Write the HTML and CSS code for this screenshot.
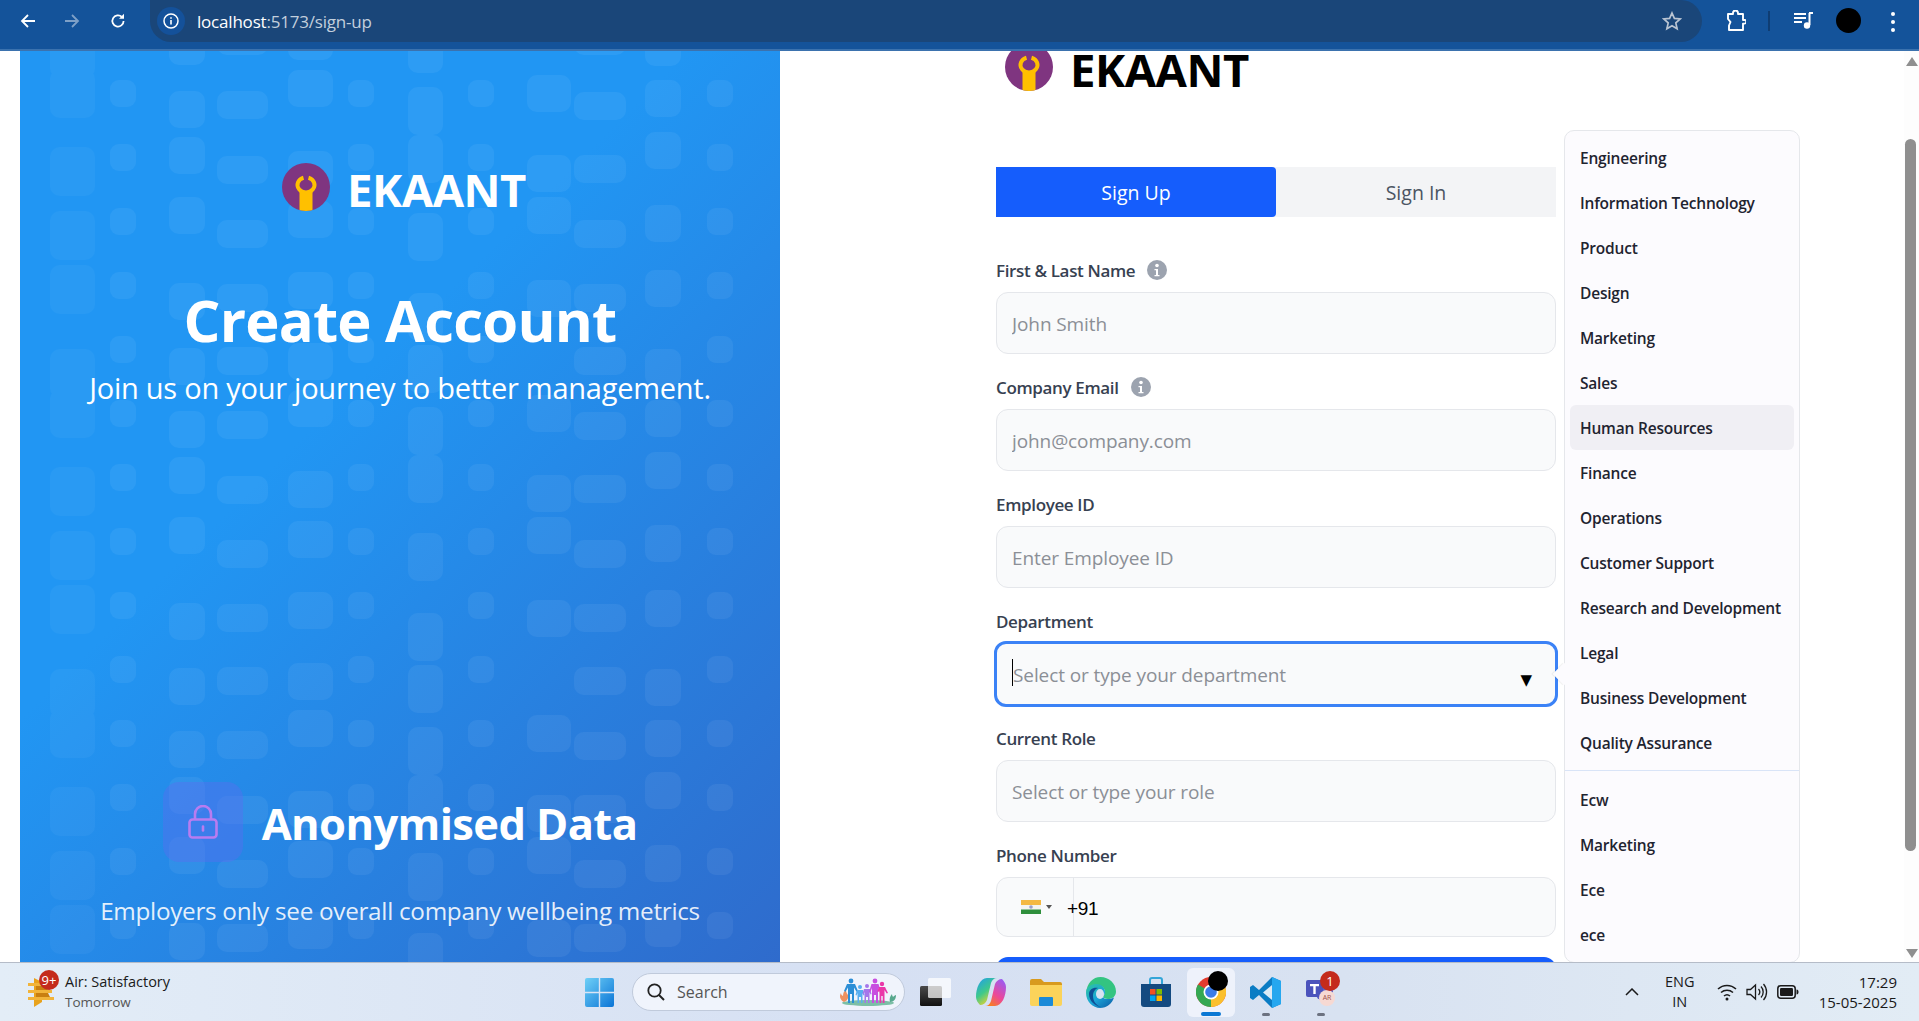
FILE: index.html
```html
<!DOCTYPE html>
<html>
<head>
<meta charset="utf-8">
<title>Sign up</title>
<link rel="stylesheet" href="styles.css">
</head>
<body>

<header class="chrome">
 <svg class="nav-icon" viewBox="0 0 16 16"><path d="M15 8H2M8 2 2 8l6 6" fill="none" stroke="#fff" stroke-width="1.8"/></svg>
 <svg class="nav-icon dim" viewBox="0 0 16 16"><path d="M1 8h13M8 2l6 6-6 6" fill="none" stroke="#fff" stroke-width="1.8"/></svg>
 <svg class="nav-icon" viewBox="0 0 16 16"><path d="M13.6 8a5.6 5.6 0 1 1-1.7-4.1" fill="none" stroke="#fff" stroke-width="1.8"/><path d="M14 0.8v5h-5z" fill="#fff"/></svg>
 <div class="omnibox">
  <span class="site-info"><svg viewBox="0 0 16 16" width="16" height="16"><circle cx="8" cy="8" r="7" fill="none" stroke="#fff" stroke-width="1.5"/><path d="M8 7v4.6M8 4.2v1.6" stroke="#fff" stroke-width="1.6"/></svg></span>
  <span class="url">localhost<span class="url-rest">:5173/sign-up</span></span>
  <svg class="star" viewBox="0 0 20 20"><path d="M10 2l2.4 5.4 5.8.6-4.4 3.9 1.3 5.8L10 14.7l-5.1 3 1.3-5.8L1.800 8l5.800-.6z" fill="none" stroke="#b9c4d2" stroke-width="1.7"/></svg>
 </div>
 <svg class="ext" viewBox="0 0 20 22"><path d="M2 4h5V3a2.500 2.500 0 0 1 5 0v1h5v6h1.500a1.800 1.800 0 0 1 0 3.600H17V20H3v-4.500L4.500 12 2 9z" fill="none" stroke="#fff" stroke-width="1.900" stroke-linejoin="round"/></svg>
 <span class="bar-sep"></span>
 <svg class="media" viewBox="0 0 20 18"><path d="M0 2h12M0 6h12M0 10h8" stroke="#fff" stroke-width="1.800"/><path d="M15 1h4M15.500 1v12" stroke="#fff" stroke-width="2" fill="none"/><circle cx="13" cy="13.500" r="3.200" fill="#fff"/></svg>
 <span class="avatar"></span>
 <span class="dots"><i></i><i></i><i></i></span>
</header>

<main class="page">
 <section class="hero">
  <svg class="pattern" width="760" height="911">
   <defs>
    <pattern id="blocks" width="760" height="320" patternUnits="userSpaceOnUse" patternTransform="translate(-20 -51)">
     <g fill="#fff" opacity=".035">
      <rect x="50" y="29" width="45" height="49" rx="10"/><rect x="50" y="69" width="45" height="49" rx="10"/><rect x="50" y="147" width="45" height="49" rx="10"/><rect x="50" y="211" width="45" height="49" rx="10"/><rect x="50" y="265" width="45" height="49" rx="10"/>
     </g>
     <g fill="#fff" opacity=".055">
      <rect x="110" y="16" width="26" height="27" rx="9"/><rect x="110" y="80" width="26" height="27" rx="9"/><rect x="110" y="144" width="26" height="27" rx="9"/><rect x="110" y="208" width="26" height="27" rx="9"/><rect x="110" y="272" width="26" height="27" rx="9"/>
      <rect x="169" y="28" width="36" height="37" rx="10"/><rect x="169" y="91" width="36" height="37" rx="10"/><rect x="169" y="137" width="36" height="37" rx="10"/><rect x="169" y="197" width="36" height="37" rx="10"/><rect x="169" y="283" width="36" height="37" rx="10"/>
      <rect x="217" y="27" width="51" height="28" rx="10"/><rect x="217" y="91" width="51" height="28" rx="10"/><rect x="217" y="156" width="51" height="28" rx="10"/><rect x="217" y="220" width="51" height="28" rx="10"/><rect x="217" y="284" width="51" height="28" rx="10"/>
      <rect x="288" y="23" width="45" height="37" rx="10"/><rect x="288" y="70" width="45" height="37" rx="10"/><rect x="288" y="151" width="45" height="37" rx="10"/><rect x="288" y="201" width="45" height="37" rx="10"/><rect x="288" y="272" width="45" height="37" rx="10"/>
      <rect x="348" y="16" width="26" height="27" rx="9"/><rect x="348" y="80" width="26" height="27" rx="9"/><rect x="348" y="144" width="26" height="27" rx="9"/><rect x="348" y="208" width="26" height="27" rx="9"/><rect x="348" y="272" width="26" height="27" rx="9"/>
      <rect x="408" y="-27" width="35" height="48" rx="10"/><rect x="408" y="25" width="35" height="48" rx="10"/><rect x="408" y="87" width="35" height="48" rx="10"/><rect x="408" y="135" width="35" height="48" rx="10"/><rect x="408" y="213" width="35" height="48" rx="10"/><rect x="408" y="293" width="35" height="48" rx="10"/>
      <rect x="468" y="16" width="26" height="27" rx="9"/><rect x="468" y="80" width="26" height="27" rx="9"/><rect x="468" y="144" width="26" height="27" rx="9"/><rect x="468" y="208" width="26" height="27" rx="9"/><rect x="468" y="272" width="26" height="27" rx="9"/>
      <rect x="527" y="75" width="44" height="37" rx="10"/><rect x="527" y="155" width="44" height="37" rx="10"/><rect x="527" y="197" width="44" height="37" rx="10"/><rect x="527" y="280" width="44" height="37" rx="10"/>
      <rect x="574" y="27" width="52" height="28" rx="10"/><rect x="574" y="92" width="52" height="28" rx="10"/><rect x="574" y="155" width="52" height="28" rx="10"/><rect x="574" y="220" width="52" height="28" rx="10"/><rect x="574" y="284" width="52" height="28" rx="10"/>
      <rect x="645" y="29" width="36" height="37" rx="10"/><rect x="645" y="80" width="36" height="37" rx="10"/><rect x="645" y="132" width="36" height="37" rx="10"/><rect x="645" y="205" width="36" height="37" rx="10"/><rect x="645" y="270" width="36" height="37" rx="10"/>
      <rect x="707" y="16" width="26" height="27" rx="9"/><rect x="707" y="80" width="26" height="27" rx="9"/><rect x="707" y="144" width="26" height="27" rx="9"/><rect x="707" y="208" width="26" height="27" rx="9"/><rect x="707" y="272" width="26" height="27" rx="9"/>
     </g>
    </pattern>
   </defs>
   <rect width="760" height="911" fill="url(#blocks)"/>
  </svg>

  <div class="brand brand-light">
   <svg class="brand-mark" viewBox="0 0 48 48"><defs><clipPath id="disc1"><circle cx="24" cy="24" r="24"/></clipPath></defs><circle cx="24" cy="24" r="24" fill="#7f3580"/><g clip-path="url(#disc1)" fill="none"><path d="M21.500 14.800A8.500 7.500 0 1 0 26.500 14.800" stroke="#ffc000" stroke-width="4"/><rect x="17.500" y="28" width="13" height="21" fill="#ffc000"/></g></svg>
   <span class="brand-name">EKAANT</span>
  </div>
  <h1 class="hero-title">Create Account</h1>
  <p class="hero-sub">Join us on your journey to better management.</p>

  <div class="feature">
   <span class="feature-icon"><svg viewBox="0 0 30 34" width="30" height="34"><path d="M7 15V9a8 8 0 0 1 16 0v6" fill="none" stroke="#b87cf0" stroke-width="2.600"/><rect x="1.500" y="14.500" width="27" height="18" rx="3" fill="none" stroke="#b87cf0" stroke-width="2.600"/><path d="M15 21.500v4" stroke="#b87cf0" stroke-width="2.600" stroke-linecap="round"/></svg></span>
   <h2 class="feature-title">Anonymised Data</h2>
  </div>
  <p class="feature-text">Employers only see overall company wellbeing metrics</p>
 </section>

 <section class="panel">
  <div class="brand brand-dark">
   <svg class="brand-mark" viewBox="0 0 48 48"><defs><clipPath id="disc2"><circle cx="24" cy="24" r="24"/></clipPath></defs><circle cx="24" cy="24" r="24" fill="#7f3580"/><g clip-path="url(#disc2)" fill="none"><path d="M21.500 14.800A8.500 7.500 0 1 0 26.500 14.800" stroke="#ffc000" stroke-width="4"/><rect x="17.500" y="28" width="13" height="21" fill="#ffc000"/></g></svg>
   <span class="brand-name">EKAANT</span>
  </div>

  <div class="tabs">
   <span class="tab tab-on">Sign Up</span>
   <span class="tab">Sign In</span>
  </div>

  <form class="form">
   <div class="field">
    <label class="field-label">First &amp; Last Name <svg class="info" viewBox="0 0 20 20"><circle cx="10" cy="10" r="10" fill="#9ca3af"/><circle cx="10" cy="5.500" r="1.800" fill="#fff"/><path d="M7.500 9h3.500v6h1.500v1.200h-5V15H9v-4.800H7.500z" fill="#fff"/></svg></label>
    <input class="input" type="text" placeholder="John Smith">
   </div>
   <div class="field">
    <label class="field-label">Company Email <svg class="info" viewBox="0 0 20 20"><circle cx="10" cy="10" r="10" fill="#9ca3af"/><circle cx="10" cy="5.500" r="1.800" fill="#fff"/><path d="M7.500 9h3.500v6h1.500v1.200h-5V15H9v-4.800H7.500z" fill="#fff"/></svg></label>
    <input class="input" type="text" placeholder="john@company.com">
   </div>
   <div class="field">
    <label class="field-label">Employee ID</label>
    <input class="input" type="text" placeholder="Enter Employee ID">
   </div>
   <div class="field">
    <label class="field-label">Department</label>
    <div class="select-wrap">
     <input class="input input-focus" type="text" placeholder="Select or type your department">
     <span class="text-caret"></span>
     <span class="select-arrow">&#9660;</span>
    </div>
   </div>
   <div class="field">
    <label class="field-label">Current Role</label>
    <input class="input" type="text" placeholder="Select or type your role">
   </div>
   <div class="field">
    <label class="field-label">Phone Number</label>
    <div class="phone">
     <span class="flag-box">
      <svg class="flag" viewBox="0 0 20 14"><rect width="20" height="5" fill="#f4b942"/><rect y="5" width="20" height="4.500" fill="#f4f4f0"/><rect y="9.500" width="20" height="4.500" fill="#2f8f3c"/><circle cx="10" cy="7" r="1.800" fill="#9aa0c8"/></svg>
      <span class="flag-arrow"></span>
     </span>
     <span class="phone-code">+91</span>
    </div>
   </div>
   <button class="submit" type="button"></button>
  </form>

  <div class="dropdown">
   <span class="dropdown-tip"></span>
   <ul class="dropdown-list">
    <li>Engineering</li>
    <li>Information Technology</li>
    <li>Product</li>
    <li>Design</li>
    <li>Marketing</li>
    <li>Sales</li>
    <li class="hover">Human Resources</li>
    <li>Finance</li>
    <li>Operations</li>
    <li>Customer Support</li>
    <li>Research and Development</li>
    <li>Legal</li>
    <li>Business Development</li>
    <li>Quality Assurance</li>
   </ul>
   <ul class="dropdown-list dropdown-extra">
    <li>Ecw</li>
    <li>Marketing</li>
    <li>Ece</li>
    <li>ece</li>
   </ul>
  </div>

  <div class="scrollbar">
   <span class="scroll-up"></span>
   <span class="scroll-thumb"></span>
   <span class="scroll-down"></span>
  </div>
 </section>
</main>

<footer class="taskbar">
 <div class="weather">
  <span class="weather-icon">
   <svg viewBox="0 0 26 32" width="26" height="32"><path d="M6 2l8 4v20l-8 5z" fill="#e8a21c"/><path d="M0 7h20v3H0zM0 14h24v3H0zM0 21h26v3H0z" fill="#f2b43a"/><path d="M8 10h10l2 4H8zM8 17h12l2 4H8z" fill="#c97f10"/></svg>
   <span class="weather-badge">9+</span>
  </span>
  <span class="weather-text"><span>Air: Satisfactory</span><span class="weather-sub">Tomorrow</span></span>
 </div>

 <svg class="win" viewBox="0 0 29 29"><defs><linearGradient id="wing" x1="0" y1="0" x2="1" y2="1"><stop offset="0" stop-color="#6fd0f7"/><stop offset="1" stop-color="#0a74d6"/></linearGradient></defs><path d="M0 2a2 2 0 0 1 2-2h11.800v13.800H0zM15.200 0H27a2 2 0 0 1 2 2v11.800H15.200zM0 15.200h13.800V29H2a2 2 0 0 1-2-2zM15.200 15.200H29V27a2 2 0 0 1-2 2H15.200z" fill="url(#wing)"/></svg>

 <div class="search">
  <svg class="search-icon" viewBox="0 0 18 18"><circle cx="7.500" cy="7.500" r="6.200" fill="none" stroke="#222" stroke-width="1.800"/><path d="M12 12l5 5" stroke="#222" stroke-width="2"/></svg>
  <span class="search-label">Search</span>
  <svg class="search-art" viewBox="0 0 60 28">
   <ellipse cx="30" cy="25" rx="26" ry="3" fill="#7cbfa6"/>
   <path d="M6 24c-4-2-5-6-3-9 0 2 1 2 2 3 0-3 1-5 3-6 0 2 1 4 2 5 1 3-1 6-4 7z" fill="#ee9160"/>
   <path d="M52 24c-1-3 0-6 2-8 0 2 1 2 1 3 1-1 2-2 3-2 0 4-2 7-6 7z" fill="#58a88e"/>
   <g fill="#2c8ed6"><circle cx="13" cy="3" r="2.400"/><path d="M9 6h8l3 7-1.500.7L16 9.500V25h-2v-9h-2v9h-2V9.500l-2.500 4.200L6 13z"/></g>
   <g fill="#58aef0"><circle cx="22" cy="9" r="2"/><path d="M19 12h6l1.500 5-1 .4L24.500 15v10h-1.500v-6h-2v6h-1.500V15l-1 2.400-1-.4z"/></g>
   <g fill="#a576ea"><circle cx="29" cy="8" r="2"/><path d="M26 11h6l1.500 5-1 .4L31.500 14v11h-1.500v-6h-2v6h-1.500V14l-1 2.400-1-.4z"/></g>
   <g fill="#c74fe0"><circle cx="37" cy="3" r="2.400"/><path d="M33.500 6h7l2.500 8-1.300.5L40 10v15h-2v-8h-2v8h-2V10l-1.700 4.500L31 14z"/></g>
   <g fill="#ea37a8"><circle cx="44" cy="6" r="2.200"/><path d="M41 9h6l3 6-1.300.6L46.500 12v13h-1.800v-7h-1.400v7h-1.800V12l-1 2-1.200-.6z"/></g>
  </svg>
 </div>

 <div class="apps">
  <span class="app">
   <svg viewBox="0 0 31 28" width="31" height="28"><defs><linearGradient id="taskv" x1="0" y1="0" x2="0" y2="1"><stop offset="0" stop-color="#4a4a4a"/><stop offset="1" stop-color="#111"/></linearGradient></defs><rect y="8" width="22" height="20" rx="1.500" fill="url(#taskv)"/><rect x="8" width="23" height="20" rx="1.500" fill="#fff" fill-opacity=".72"/></svg>
  </span>
  <span class="app">
   <svg viewBox="0 0 30 28" width="30" height="28"><defs><linearGradient id="cop1" x1="0" y1="0" x2=".6" y2="1"><stop offset="0" stop-color="#1f9cf0"/><stop offset=".55" stop-color="#3fc98a"/><stop offset="1" stop-color="#f5d327"/></linearGradient><linearGradient id="cop2" x1=".8" y1="0" x2=".2" y2="1"><stop offset="0" stop-color="#9a5cf2"/><stop offset=".55" stop-color="#ec4899"/><stop offset="1" stop-color="#f98316"/></linearGradient></defs><path d="M11 0h10c-3 0-5 2-6 5l-4 17c-1 3-4 5-7 5-2-2-4-5-4-8C0 10 4 0 11 0z" fill="url(#cop1)"/><path d="M19 28H9c3 0 5-2 6-5l4-17c1-3 4-5 7-5 2 2 4 5 4 8 0 9-4 19-11 19z" fill="url(#cop2)"/></svg>
  </span>
  <span class="app">
   <svg viewBox="0 0 32 28" width="32" height="28"><path d="M0 3a2 2 0 0 1 2-2h9l3 3h16a2 2 0 0 1 2 2v3H0z" fill="#d89a1e"/><path d="M0 7h32v19a2 2 0 0 1-2 2H2a2 2 0 0 1-2-2z" fill="#fbd35a"/><rect x="9" y="19" width="14" height="9" rx="1" fill="#1a8ad8"/></svg>
  </span>
  <span class="app">
   <svg viewBox="0 0 31 31" width="31" height="31"><defs><linearGradient id="edg" x1="0" y1="0" x2="1" y2="1"><stop offset="0" stop-color="#2ec4a0"/><stop offset=".5" stop-color="#1aa5d8"/><stop offset="1" stop-color="#0c59a4"/></linearGradient></defs><path d="M15.500 0C24 0 31 6.500 31 14.500c0 5-4 7.500-8 7.500-3 0-5-1-5-2.500 0-1 2-1.500 2-4.500 0-4-3.500-7-8-7-5 0-9 3.500-11 8C2 6 8 0 15.500 0z" fill="#33c481"/><path d="M1 16c0-5 4-9 10-9 5 0 9 3 9 8 0 3-2 3.500-2 4.500 0 3 6 3.500 11 1-2 6-7 10.500-14 10.500C8 31 1 24.500 1 16z" fill="url(#edg)"/><path d="M13 11c-3 1-5 4-5 8 0 5 3 9 8 11-6-1-12-6-12-13 0-4 4-7 9-6z" fill="#0f4f95"/><ellipse cx="15" cy="17" rx="4" ry="5" fill="#d8e2f1"/></svg>
  </span>
  <span class="app">
   <svg viewBox="0 0 30 30" width="30" height="30"><path d="M9 8V3a2 2 0 0 1 2-2h8a2 2 0 0 1 2 2v5" fill="none" stroke="#33a5d8" stroke-width="2"/><path d="M0 7h30v20a3 3 0 0 1-3 3H3a3 3 0 0 1-3-3z" fill="#144a80"/><rect x="9" y="12" width="5.500" height="5.500" fill="#f25022"/><rect x="15.500" y="12" width="5.500" height="5.500" fill="#7fba00"/><rect x="9" y="18.500" width="5.500" height="5.500" fill="#00a4ef"/><rect x="15.500" y="18.500" width="5.500" height="5.500" fill="#ffb900"/></svg>
  </span>
  <span class="app app-active">
   <svg viewBox="0 0 30 30" width="30" height="30"><circle cx="15" cy="15" r="15" fill="#e33b2e"/><path d="M15 15 28 7.500A15 15 0 0 1 15 30z" fill="#fbc02d"/><path d="M15 15 15 30A15 15 0 0 1 2 7.500z" fill="#34a853"/><circle cx="15" cy="15" r="7.500" fill="#fff"/><circle cx="15" cy="15" r="5.800" fill="#3b7be8"/></svg>
   <span class="app-avatar"></span>
   <span class="app-line"></span>
  </span>
  <span class="app app-open">
   <svg viewBox="0 0 31 31" width="31" height="31"><path d="M22 0l9 4v23l-9 4L9 18l-6 5-3-2v-11l3-2 6 5z" fill="#0a7cc4"/><path d="M22 0l9 4v23l-9 4z" fill="#25a7ef"/><path d="M22 8v15l-9-7.500z" fill="#f2f6fc" fill-opacity=".9"/></svg>
  </span>
  <span class="app app-open">
   <svg class="teams" viewBox="0 0 30 30" width="30" height="30"><circle cx="20" cy="10" r="7" fill="#7b83eb"/><circle cx="18" cy="18" r="9" fill="#5b5fc7"/><rect y="6" width="17" height="17" rx="2" fill="#4b53bc"/><path d="M4 10h9v2.200h-3.300V20H7.300v-7.800H4z" fill="#fff"/></svg>
   <span class="teams-initials">AR</span>
   <span class="teams-badge">1</span>
  </span>
 </div>

 <div class="tray">
  <svg class="tray-up" viewBox="0 0 14 8"><path d="M1 7l6-6 6 6" fill="none" stroke="#1a1a1a" stroke-width="1.500"/></svg>
  <span class="lang">ENG<br>IN</span>
  <svg class="tray-icon" viewBox="0 0 20 18" width="20" height="18"><g fill="none" stroke="#1a1a1a" stroke-width="1.500"><path d="M1 6a13 13 0 0 1 18 0M4 9.500a9 9 0 0 1 12 0M7 13a4.500 4.500 0 0 1 6 0"/></g><circle cx="10" cy="16" r="1.500" fill="#1a1a1a"/></svg>
  <svg class="tray-icon" viewBox="0 0 22 18" width="22" height="18"><g fill="none" stroke="#1a1a1a" stroke-width="1.300"><path d="M1 6.500h3.500L9.500 2v14l-5-4.500H1z"/><path d="M12.500 6a4.500 4.500 0 0 1 0 6M15 3.500a8 8 0 0 1 0 11M17.500 1a12 12 0 0 1 0 16"/></g></svg>
  <svg class="tray-icon" viewBox="0 0 22 14" width="22" height="14"><rect x=".8" y=".8" width="17.400" height="12.400" rx="3" fill="none" stroke="#1a1a1a" stroke-width="1.500"/><rect x="3" y="3" width="13" height="8" rx="1.200" fill="#1a1a1a"/><path d="M19.500 4.500c1.500 0 2 1 2 2.500s-.5 2.500-2 2.500z" fill="#1a1a1a"/></svg>
  <span class="clock">17:29<br>15-05-2025</span>
 </div>
</footer>

</body>
</html>
```
FILE: styles.css
```css
* {
 box-sizing: border-box;
}
html, body {
 margin: 0;
 height: 100%;
 overflow: hidden;
}
body {
 width: 1919px;
 height: 1021px;
 display: flex;
 flex-direction: column;
 background: #fff;
 font-family: "Open Sans", "Noto Sans", sans-serif;
}

/* browser bar */
.chrome {
 height: 51px;
 flex: none;
 display: flex;
 align-items: flex-start;
 background: #14539a;
 border-bottom: 2px solid #3b72ae;
}
.nav-icon {
 width: 16px;
 height: 16px;
 margin: 13px 0 0 20px;
 flex: none;
}
.nav-icon + .nav-icon {
 margin-left: 28px;
}
.nav-icon + .nav-icon + .nav-icon {
 margin-left: 30px;
}
.dim {
 opacity: .45;
}
.omnibox {
 width: 1552px;
 height: 42px;
 margin-left: 24px;
 display: flex;
 align-items: center;
 padding-left: 7px;
 background: #1a4679;
 border-radius: 0 21px 21px 21px;
}
.site-info {
 width: 28px;
 height: 28px;
 border-radius: 50%;
 background: #14519a;
 display: flex;
 align-items: center;
 justify-content: center;
}
.url {
 margin-left: 12px;
 font-size: 17px;
 letter-spacing: -.2px;
 color: #fff;
}
.url-rest {
 color: #c2cfdd;
}
.star {
 width: 20px;
 height: 20px;
 margin-left: auto;
 margin-right: 20px;
}
.ext {
 width: 20px;
 height: 22px;
 margin: 10px 0 0 24px;
}
.bar-sep {
 width: 2px;
 height: 20px;
 margin: 11px 0 0 22px;
 background: #0f3d73;
}
.media {
 width: 20px;
 height: 18px;
 margin: 12px 0 0 24px;
}
.avatar {
 width: 25px;
 height: 25px;
 margin: 8px 0 0 22px;
 border-radius: 50%;
 background: #000;
}
.dots {
 display: flex;
 flex-direction: column;
 gap: 4px;
 margin: 12px 0 0 30px;
}
.dots i {
 width: 4px;
 height: 4px;
 border-radius: 50%;
 background: #fff;
}

/* page */
.page {
 flex: 1;
 min-height: 0;
 display: flex;
 position: relative;
 overflow: hidden;
 padding-left: 20px;
}
.hero {
 width: 760px;
 flex: none;
 position: relative;
 display: flex;
 flex-direction: column;
 align-items: center;
 padding-top: 112px;
 color: #fff;
 background: linear-gradient(135deg, #2196f3 40%, #2f6bcc);
}
.hero > * {
 position: relative;
}
.hero .pattern {
 position: absolute;
 left: 0;
 top: 0;
}
.brand {
 height: 48px;
 display: flex;
 align-items: flex-start;
 gap: 17px;
}
.brand-light {
 margin-left: 8px;
}
.brand-mark {
 width: 48px;
 height: 48px;
}
.brand-name {
 height: 48px;
 padding-top: 8px;
 font-size: 45.500px;
 font-weight: 700;
 line-height: 37px;
 letter-spacing: -.5px;
}
.hero-title {
 margin: 75px 0 0;
 font-size: 58px;
 line-height: 68px;
 font-weight: 700;
 letter-spacing: -.8px;
}
.hero-sub {
 margin: 16px 0 0;
 font-size: 29px;
 line-height: 36px;
 letter-spacing: -.25px;
}
.feature {
 margin-top: 376px;
 display: flex;
 align-items: center;
 gap: 19px;
}
.feature-icon {
 width: 80px;
 height: 80px;
 border-radius: 16px;
 background: rgba(99, 102, 241, .35);
 display: flex;
 align-items: center;
 justify-content: center;
}
.feature-title {
 margin: 0;
 padding-top: 2px;
 font-size: 43.500px;
 font-weight: 700;
 letter-spacing: -.6px;
}
.feature-text {
 margin: 32px 0 0;
 font-size: 24.300px;
 line-height: 34px;
 letter-spacing: -.3px;
 color: rgba(255, 255, 255, .88);
}

/* form side */
.panel {
 flex: 1;
 padding-left: 216px;
}
.brand-dark {
 margin: -8px 0 0 9px;
 color: #000;
}
.tabs {
 width: 560px;
 height: 50px;
 margin-top: 76px;
 display: flex;
 background: #f3f4f6;
}
.tab {
 width: 280px;
 display: flex;
 align-items: center;
 justify-content: center;
 font-size: 19.500px;
 color: #4b5563;
}
.tab-on {
 background: #155dfc;
 color: #fff;
 border-radius: 0 4px 4px 0;
}
.form {
 width: 560px;
 margin-top: 41px;
}
.field {
 margin-bottom: 21px;
}
.field-label {
 height: 24px;
 margin-bottom: 10px;
 display: flex;
 align-items: center;
 gap: 12px;
 font-size: 17px;
 font-weight: 600;
 letter-spacing: -.35px;
 color: #374151;
}
.info {
 width: 20px;
 height: 20px;
}
.input {
 display: block;
 width: 100%;
 height: 62px;
 padding: 1px 15px 0;
 border: 1px solid #e5e7eb;
 border-radius: 12px;
 background: #f9fafb;
 font-family: inherit;
 font-size: 19px;
 letter-spacing: -.1px;
 outline: none;
}
.input::placeholder {
 color: #8b8f96;
 opacity: 1;
}
.select-wrap {
 position: relative;
}
.input-focus {
 width: 564px;
 height: 66px;
 margin: -2px 0 -2px -2px;
 padding-left: 16px;
 border: 3px solid #3b82f6;
}
.text-caret {
 position: absolute;
 left: 16px;
 top: 18px;
 width: 1px;
 height: 27px;
 background: #000;
}
.select-arrow {
 position: absolute;
 right: 24px;
 top: 29px;
 font-family: "DejaVu Sans", sans-serif;
 font-size: 15px;
 line-height: 20px;
 color: #000;
}
.phone {
 height: 60px;
 display: flex;
 align-items: center;
 border: 1px solid #e5e7eb;
 border-radius: 12px;
 background: #f9fafb;
}
.flag-box {
 width: 77px;
 height: 100%;
 display: flex;
 align-items: center;
 padding-left: 24px;
 gap: 5px;
 border-right: 1px solid #e5e7eb;
}
.flag {
 width: 20px;
 height: 14px;
}
.flag-arrow {
 border-left: 3px solid transparent;
 border-right: 3px solid transparent;
 border-top: 4px solid #555;
}
.phone-code {
 margin-left: -7px;
 padding-top: 3px;
 font-family: "Liberation Sans", sans-serif;
 font-size: 19px;
 letter-spacing: -.3px;
 color: #000;
}
.submit {
 display: block;
 width: 100%;
 height: 50px;
 margin-top: -1px;
 border: none;
 border-radius: 12px;
 background: #155dfc;
}

/* department menu, over the form */
.dropdown {
 position: absolute;
 left: 1564px;
 top: 79px;
 width: 236px;
 height: 833px;
 padding: 4px 5px;
 background: #fcfbfe;
 border: 1px solid #e5e7eb;
 border-radius: 10px;
 font-size: 15.500px;
 font-weight: 600;
 color: #1f2430;
}
.dropdown-tip {
 position: absolute;
 left: -9px;
 top: 535px;
 width: 16px;
 height: 16px;
 background: #fcfbfe;
 box-shadow: -1px 1px 1px rgba(0, 0, 0, .06);
 transform: rotate(45deg);
}
.dropdown-list {
 position: relative;
 margin: 0;
 padding: 0;
 list-style: none;
}
.dropdown-list li {
 height: 45px;
 display: flex;
 align-items: center;
 padding-left: 10px;
 border-radius: 6px;
 letter-spacing: -.2px;
 white-space: nowrap;
}
.dropdown-list .hover {
 background: #f0eff4;
}
.dropdown-extra {
 margin: 5px -5px 0;
 padding: 6px 5px 0;
 border-top: 1px solid #d9e4f7;
}
.scrollbar {
 position: absolute;
 right: 0;
 top: 0;
 width: 15px;
 height: 100%;
 background: #fdfdfd;
}
.scroll-up, .scroll-down {
 position: absolute;
 left: 2px;
 border-left: 6px solid transparent;
 border-right: 6px solid transparent;
}
.scroll-up {
 top: 6px;
 border-bottom: 9px solid #8f8f8f;
}
.scroll-down {
 bottom: 4px;
 border-top: 9px solid #8f8f8f;
}
.scroll-thumb {
 position: absolute;
 left: 1px;
 top: 88px;
 width: 11px;
 height: 712px;
 border-radius: 6px;
 background: #8f8f8f;
}

/* windows taskbar */
.taskbar {
 height: 59px;
 flex: none;
 display: flex;
 align-items: center;
 border-top: 1px solid #b5bcc8;
 background: linear-gradient(90deg, #e3edf7, #d6e0f3 45%, #d8e2f1 70%, #e2ecf5);
 font-size: 14px;
 color: #1a1a1a;
}
.weather {
 width: 585px;
 flex: none;
 display: flex;
 align-items: center;
 padding-left: 28px;
}
.weather-icon {
 position: relative;
 width: 26px;
 height: 32px;
}
.weather-badge {
 position: absolute;
 left: 11px;
 top: -6px;
 width: 20px;
 height: 20px;
 border-radius: 50%;
 background: #c42b1c;
 color: #fff;
 font-size: 13px;
 line-height: 20px;
 text-align: center;
}
.weather-text {
 margin-left: 11px;
 display: flex;
 flex-direction: column;
 gap: 2px;
 line-height: 18px;
 font-size: 14.500px;
}
.weather-sub {
 font-size: 13.500px;
 color: #555;
}
.win {
 width: 29px;
 height: 29px;
 flex: none;
}
.search {
 width: 273px;
 height: 38px;
 margin-left: 18px;
 flex: none;
 display: flex;
 align-items: center;
 padding-left: 14px;
 border: 1px solid #c0cadb;
 border-radius: 19px;
 background: #f0f4fc;
}
.search-icon {
 width: 18px;
 height: 18px;
}
.search-label {
 margin-left: 12px;
 font-size: 16px;
 color: #555;
}
.search-art {
 width: 60px;
 height: 28px;
 margin-left: auto;
 margin-right: 6px;
}
.apps {
 display: flex;
 margin-left: 3px;
}
.app {
 position: relative;
 width: 55px;
 height: 58px;
 display: flex;
 align-items: center;
 justify-content: center;
}
.app-active::before {
 content: "";
 position: absolute;
 left: 4px;
 top: 5px;
 width: 48px;
 height: 49px;
 border-radius: 6px;
 background: #eef2fb;
}
.app-active svg {
 position: relative;
}
.app-avatar {
 position: absolute;
 left: 25px;
 top: 8px;
 width: 20px;
 height: 20px;
 border-radius: 50%;
 background: #000;
}
.app-line {
 position: absolute;
 left: 18px;
 top: 49px;
 width: 20px;
 height: 4px;
 border-radius: 2px;
 background: #0a78d4;
}
.app-open::after {
 content: "";
 position: absolute;
 left: 24px;
 top: 50px;
 width: 8px;
 height: 3px;
 border-radius: 2px;
 background: #6c7280;
}
.teams {
 margin-top: -6px;
}
.teams-initials {
 position: absolute;
 left: 26px;
 top: 27px;
 width: 16px;
 height: 16px;
 border-radius: 50%;
 background: #f6d9d3;
 color: #a0524a;
 font-size: 7px;
 line-height: 16px;
 text-align: center;
}
.teams-badge {
 position: absolute;
 left: 27px;
 top: 8px;
 width: 20px;
 height: 20px;
 border-radius: 50%;
 background: #c42b1c;
 color: #fff;
 font-size: 13px;
 line-height: 20px;
 text-align: center;
}
.tray {
 margin-left: auto;
 display: flex;
 align-items: center;
 padding-right: 22px;
}
.tray-up {
 width: 14px;
 height: 8px;
}
.lang {
 width: 30px;
 margin-left: 26px;
 text-align: center;
 line-height: 20px;
 font-size: 14.500px;
}
.tray-icon {
 margin-left: 9px;
}
.lang + .tray-icon {
 margin-left: 22px;
}
.clock {
 margin-left: 20px;
 text-align: right;
 line-height: 20px;
 font-size: 15px;
}
```
